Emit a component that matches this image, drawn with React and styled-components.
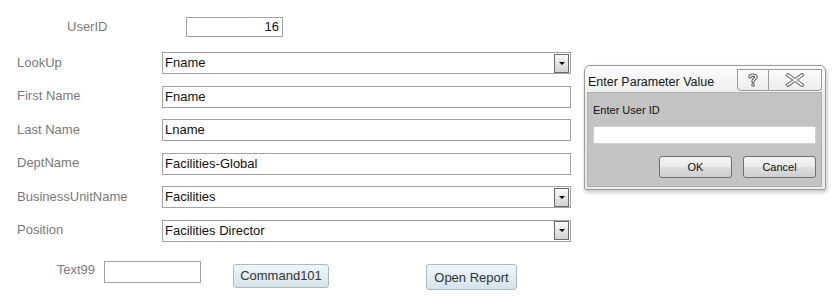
import React from "react";
import styled, { createGlobalStyle } from "styled-components";

const Global = createGlobalStyle`
  html, body {
    margin: 0;
    padding: 0;
    background: #ffffff;
  }
  body {
    font-family: "Liberation Sans", Arial, sans-serif;
  }
`;

const Page = styled.div`
  position: relative;
  width: 836px;
  height: 299px;
  padding-top: 17px;
  box-sizing: border-box;
  overflow: hidden;
`;

const Label = styled.div`
  color: #7a7a7a;
  font-size: 13px;
  width: ${(p) => p.w || 145}px;
  flex: none;
  margin-top: ${(p) => p.up || -2}px;
  text-align: ${(p) => (p.right ? "right" : "left")};
  padding-right: ${(p) => (p.right ? 9 : 0)}px;
  box-sizing: border-box;
  white-space: nowrap;
`;

const TopRow = styled.div`
  display: flex;
  align-items: center;
  padding-left: 67px;
  height: 20px;
`;

const Box = styled.div`
  width: ${(p) => p.w}px;
  height: ${(p) => p.h || 22}px;
  border: 1px solid #a3a3a3;
  box-sizing: border-box;
  background: #fff;
  color: #111;
  font-size: 13px;
  display: flex;
  align-items: center;
  justify-content: ${(p) => (p.right ? "flex-end" : "flex-start")};
  padding: 0 ${(p) => (p.right ? 3 : 2)}px 1px 2px;
  flex: none;
`;

const Rows = styled.div`
  display: flex;
  flex-direction: column;
  gap: 11.6px;
  margin-top: 15px;
  padding-left: 17px;
`;

const Row = styled.div`
  display: flex;
  align-items: center;
  height: 22px;
`;

const Combo = styled(Box)`
  justify-content: space-between;
  padding-right: 1px;
`;

const DropBtn = styled.div`
  width: 15px;
  height: 19px;
  margin-bottom: -1px;
  border: 1px solid #6a6a6a;
  box-sizing: border-box;
  background: linear-gradient(#fafafa, #d2d2d2);
  display: flex;
  align-items: center;
  justify-content: center;
  &::after {
    content: "";
    border-left: 3px solid transparent;
    border-right: 3px solid transparent;
    border-top: 3px solid #000;
  }
`;

const BottomRow = styled.div`
  display: flex;
  align-items: flex-start;
  margin-top: 19px;
  padding-left: 55px;
`;

const Cmd = styled.button`
  width: ${(p) => p.w}px;
  height: ${(p) => p.h}px;
  margin-top: 3px;
  margin-left: ${(p) => p.ml}px;
  border: 1px solid #a9bcc6;
  border-radius: 3px;
  background: linear-gradient(#eef5f8, #d5e4ea);
  color: #333;
  font-family: "Liberation Sans", Arial, sans-serif;
  font-size: 13px;
  padding: ${(p) => p.pt || 0}px 0 0;
  flex: none;
`;

const Dialog = styled.div`
  position: absolute;
  left: 584px;
  top: 65px;
  width: 242px;
  height: 125px;
  box-sizing: border-box;
  border: 1px solid #9a9a9a;
  border-radius: 6px 6px 2px 2px;
  background: linear-gradient(#fdfdfd, #eeeeee 30px, #eaeaea);
  box-shadow: 1px 2px 4px rgba(0, 0, 0, 0.25);
  display: flex;
  flex-direction: column;
  padding: 0 3px 2px 2px;
  font-family: "Liberation Sans", Arial, sans-serif;
`;

const TitleBar = styled.div`
  height: 26px;
  display: flex;
  align-items: flex-start;
  justify-content: space-between;
  flex: none;
`;

const Title = styled.div`
  font-size: 12.5px;
  color: #101820;
  padding: 9px 0 0 1px;
`;

const CapBtns = styled.div`
  display: flex;
  margin-top: 3px;
`;

const CapBtn = styled.div`
  width: ${(p) => p.w}px;
  height: 22px;
  box-sizing: border-box;
  border: 1px solid #9b9b9b;
  border-left-width: ${(p) => (p.first ? 1 : 0)}px;
  border-radius: ${(p) => (p.first ? "0 0 0 4px" : "0 0 4px 0")};
  background: linear-gradient(#fbfbfb, #ececec);
  display: flex;
  align-items: center;
  justify-content: center;
`;

const Body = styled.div`
  flex: 1;
  background: #c3c3c3;
  border: 1px solid #b0b0b0;
  display: flex;
  flex-direction: column;
  padding: 0 5px 0 5px;
`;

const Prompt = styled.div`
  font-size: 11px;
  color: #111;
  margin-top: 11px;
`;

const DlgInput = styled.div`
  height: 18px;
  margin-top: 10px;
  background: #fff;
  border: 1px solid #d0d0d0;
  box-sizing: border-box;
`;

const DlgBtns = styled.div`
  display: flex;
  justify-content: flex-end;
  gap: 11px;
  margin-top: 12px;
`;

const DlgBtn = styled.button`
  width: 73px;
  height: 22px;
  border: 1px solid #707070;
  border-radius: 3px;
  background: linear-gradient(#f4f4f4 0%, #ebebeb 50%, #dddddd 51%, #cfcfcf 100%);
  font-family: "Liberation Sans", Arial, sans-serif;
  font-size: 11px;
  color: #111;
  padding: 0;
`;

const HelpIcon = () => (
  <svg width="12" height="16" viewBox="0 0 12 16">
    <path
      d="M3 5 C3 2.5 9 2.5 9 5 C9 7 6 7 6 9.5"
      fill="none"
      stroke="#5a5a5a"
      strokeWidth="3.4"
      strokeLinecap="round"
    />
    <path
      d="M3 5 C3 2.5 9 2.5 9 5 C9 7 6 7 6 9.5"
      fill="none"
      stroke="#fff"
      strokeWidth="1.3"
      strokeLinecap="round"
    />
    <circle cx="6" cy="13" r="1.8" fill="#5a5a5a" />
    <circle cx="6" cy="13" r="0.7" fill="#fff" />
  </svg>
);

const CloseIcon = () => (
  <svg width="20" height="14" viewBox="0 0 20 14">
    <path d="M3 2 L17 12 M17 2 L3 12" stroke="#6a6a6a" strokeWidth="3.6" strokeLinecap="square" />
    <path d="M3 2 L17 12 M17 2 L3 12" stroke="#fff" strokeWidth="1.6" strokeLinecap="square" />
  </svg>
);

const fields = [
  { label: "LookUp", value: "Fname", combo: true },
  { label: "First Name", value: "Fname" },
  { label: "Last Name", value: "Lname" },
  { label: "DeptName", value: "Facilities-Global" },
  { label: "BusinessUnitName", value: "Facilities", combo: true },
  { label: "Position", value: "Facilities Director", combo: true },
];

export default function App() {
  return (
    <Page>
      <Global />
      <TopRow>
        <Label w={119} up={-1}>UserID</Label>
        <Box w={97} h={20} right>16</Box>
      </TopRow>

      <Rows>
        {fields.map((f) =>
          f.combo ? (
            <Row key={f.label}>
              <Label>{f.label}</Label>
              <Combo w={409}>
                <span>{f.value}</span>
                <DropBtn />
              </Combo>
            </Row>
          ) : (
            <Row key={f.label}>
              <Label>{f.label}</Label>
              <Box w={409}>{f.value}</Box>
            </Row>
          )
        )}
      </Rows>

      <BottomRow>
        <Label w={49} up={1} right>Text99</Label>
        <Box w={97} />
        <Cmd w={96} h={24} ml={32}>Command101</Cmd>
        <Cmd w={91} h={26} ml={97} pt={2}>Open Report</Cmd>
      </BottomRow>

      <Dialog>
        <TitleBar>
          <Title>Enter Parameter Value</Title>
          <CapBtns>
            <CapBtn w={32} first>
              <HelpIcon />
            </CapBtn>
            <CapBtn w={53}>
              <CloseIcon />
            </CapBtn>
          </CapBtns>
        </TitleBar>
        <Body>
          <Prompt>Enter User ID</Prompt>
          <DlgInput />
          <DlgBtns>
            <DlgBtn>OK</DlgBtn>
            <DlgBtn>Cancel</DlgBtn>
          </DlgBtns>
        </Body>
      </Dialog>
    </Page>
  );
}
